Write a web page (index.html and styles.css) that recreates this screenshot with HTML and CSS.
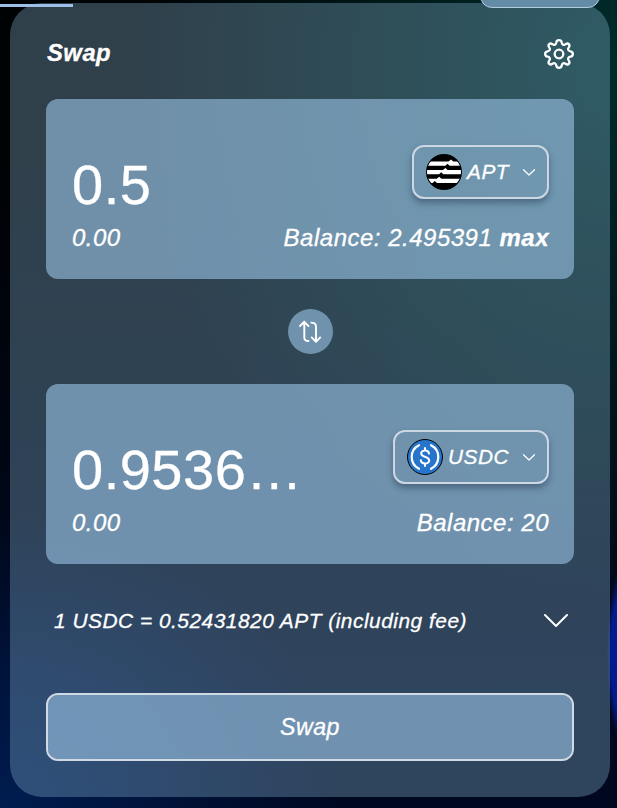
FILE: index.html
```
<!DOCTYPE html>
<html lang="en">

<head>
    <meta charset="UTF-8">
    <meta name="viewport" content="width=device-width, initial-scale=1.0">
    <title>Swap</title>
    <link rel="stylesheet" href="styles.css">
</head>

<body>
    <div class="tab-line"></div>
    <div class="wallet-btn"></div>

    <main class="card">
        <header class="card-header">
            <h2 class="title">Swap</h2>
            <svg class="gear" viewBox="0 0 30 30">
                <path d="M12.3 3.5C12.8 .4 17.2 .4 17.7 3.5C18.2 6 19.8 6.6 21.6 5.2C24.1 3.4 26.6 5.9 24.8 8.4C23.4 10.2 24 11.8 26.5 12.3C29.6 12.8 29.6 17.2 26.5 17.7C24 18.2 23.4 19.8 24.8 21.6C26.6 24.1 24.1 26.6 21.6 24.8C19.8 23.4 18.2 24 17.7 26.5C17.2 29.6 12.8 29.6 12.3 26.5C11.8 24 10.2 23.4 8.4 24.8C5.9 26.6 3.4 24.1 5.2 21.6C6.6 19.8 6 18.2 3.5 17.7C.4 17.2 .4 12.8 3.5 12.3C6 11.8 6.6 10.2 5.2 8.4C3.4 5.9 5.9 3.4 8.4 5.2C10.2 6.6 11.8 6 12.3 3.5Z" />
                <circle cx="15" cy="15" r="4.3" />
            </svg>
        </header>

        <section class="panel">
            <div class="row">
                <div class="amount">0.5</div>
                <button class="token">
                    <svg class="coin" viewBox="0 0 36 36">
                        <clipPath id="round"><circle cx="18" cy="18" r="17" /></clipPath>
                        <circle cx="18" cy="18" r="18" fill="#000" />
                        <g clip-path="url(#round)" fill="#fff">
                            <path d="M0 7.5H22.5L25 5.6L27.2 7.5H36V11.8H23.6L21.5 9.8L19.4 11.8H0Z" />
                            <path d="M0 16H17L19.4 14.1L21.6 16H36V20.3H17.3L15.2 18.3L13.1 20.3H0Z" />
                            <path d="M0 24.7H10.8L13.2 22.8L15.4 24.7H36V29H11L8.8 26.9L6.6 29H0Z" />
                        </g>
                    </svg>
                    <span>APT</span>
                    <svg class="arrow" viewBox="0 0 12 7"><path d="M.5 .7L6 6L11.5 .7" /></svg>
                </button>
            </div>
            <div class="row info">
                <span>0.00</span>
                <span>Balance: 2.495391 <b>max</b></span>
            </div>
        </section>

        <button class="switch">
            <svg viewBox="0 0 24 24">
                <path d="M2 6L6.3 1.8L10.4 6M6.3 1.8V17.5Q6.3 21 10.5 21M13.3 2.6Q18 2.6 18 6.5V21.6M13.7 17.4L18 21.8L22.2 17.4" />
            </svg>
        </button>

        <section class="panel">
            <div class="row">
                <div class="amount">0.9536…</div>
                <button class="token">
                    <svg class="coin" viewBox="0 0 36 36">
                        <circle cx="18" cy="18" r="17.5" fill="#2775ca" stroke="#000" />
                        <g fill="none" stroke="#fff" stroke-width="2.2">
                            <path d="M12 6.2A13.2 13.2 0 0 0 12 29.8M24 6.2A13.2 13.2 0 0 1 24 29.8" />
                            <path d="M22 14.6C21.6 10.4 14.2 10.6 14.2 14.4C14.2 18.8 22.2 16.9 22.2 21.4C22.2 25.6 14.2 25.6 13.8 21.2M18 9V11.4M18 24.6V27" stroke-width="2" />
                        </g>
                    </svg>
                    <span>USDC</span>
                    <svg class="arrow" viewBox="0 0 12 7"><path d="M.5 .7L6 6L11.5 .7" /></svg>
                </button>
            </div>
            <div class="row info">
                <span>0.00</span>
                <span>Balance: 20</span>
            </div>
        </section>

        <div class="rate">
            <span>1 USDC = 0.52431820 APT (including fee)</span>
            <svg class="rate-arrow" viewBox="0 0 24 14"><path d="M1 1L12 12L23 1" /></svg>
        </div>

        <button class="swap-btn">Swap</button>
    </main>
</body>

</html>
```

FILE: styles.css
```
* {
    box-sizing: border-box;
}

body {
    margin: 0;
    height: 808px;
    padding: 3px 7px 0 10px;
    overflow: hidden;
    position: relative;
    font-family: "Liberation Sans", Arial, sans-serif;
    font-style: italic;
    letter-spacing: 0.5px;
    color: #fff;
    -webkit-text-stroke: 0.3px #fff;
    background:
        radial-gradient(ellipse 14px 85px at 621px 655px, #001c90 70%, transparent),
        radial-gradient(ellipse 480px 560px at 100% 8%, #002c2c, transparent),
        radial-gradient(ellipse 340px 300px at 0 100%, #001c50, transparent),
        linear-gradient(#000304 20%, #000820 85%);
}

button {
    font: inherit;
    letter-spacing: inherit;
    color: inherit;
    padding: 0;
}

svg {
    display: block;
    fill: none;
    stroke-linecap: round;
    stroke-linejoin: round;
}

/* pieces of the page around the card */
.tab-line {
    position: absolute;
    z-index: 1;
    left: 0;
    top: 4px;
    width: 73px;
    height: 3px;
    background: #9dbfe8;
}

.wallet-btn {
    position: absolute;
    z-index: 1;
    right: 17px;
    top: -30px;
    width: 120px;
    height: 38px;
    border: 1px solid #b4cbdc;
    border-radius: 12px;
    background: #658ca6;
}

.card {
    height: 794px;
    padding: 0 36px;
    border-radius: 32px;
    background: rgba(136, 180, 208, 0.35);
}

.card-header {
    display: flex;
    justify-content: space-between;
    align-items: center;
    height: 96px;
    padding-top: 5px;
}

.title {
    margin: 0;
    padding: 0 0 2px 1px;
    font-size: 23.8px;
}

.gear {
    width: 30px;
    height: 30px;
    stroke: #fff;
    stroke-width: 2.3;
}

.panel {
    height: 180px;
    padding: 46px 25px 0 26px;
    border-radius: 12px;
    background: rgba(148, 187, 220, 0.65);
}

.row {
    display: flex;
    justify-content: space-between;
}

.amount {
    padding-top: 8px;
    font-size: 56px;
    line-height: 64px;
    font-style: normal;
}

.token {
    display: flex;
    align-items: center;
    height: 54px;
    padding: 0 12px;
    border: 2px solid #ccd7e4;
    border-radius: 12px;
    background: transparent;
    box-shadow: 0 4px 6px rgba(40, 60, 85, 0.5);
    font-size: 20.8px;
}

.coin {
    width: 36px;
    height: 36px;
    margin-right: 5px;
}

.arrow {
    width: 12px;
    height: 7px;
    margin-left: 14px;
    stroke: #fff;
    stroke-width: 1.2;
}

.info {
    padding-top: 7px;
    font-size: 24px;
    line-height: 28px;
}

.switch {
    display: flex;
    justify-content: center;
    align-items: center;
    width: 45px;
    height: 45px;
    margin: 30px auto;
    border: 0;
    border-radius: 50%;
    background: rgba(148, 187, 220, 0.65);
}

.switch svg {
    width: 24px;
    height: 24px;
    stroke: #fff;
    stroke-width: 1.9;
}

.rate {
    display: flex;
    justify-content: space-between;
    align-items: center;
    height: 129px;
    padding: 0 6px 15px 8px;
    font-size: 20.9px;
}

.rate-arrow {
    width: 24px;
    height: 14px;
    stroke: #fff;
    stroke-width: 2;
}

.swap-btn {
    display: block;
    width: 100%;
    height: 68px;
    border: 2px solid #d0dae4;
    border-radius: 12px;
    background: rgba(148, 187, 220, 0.65);
    background-clip: padding-box;
    font-size: 23.2px;
}
```
